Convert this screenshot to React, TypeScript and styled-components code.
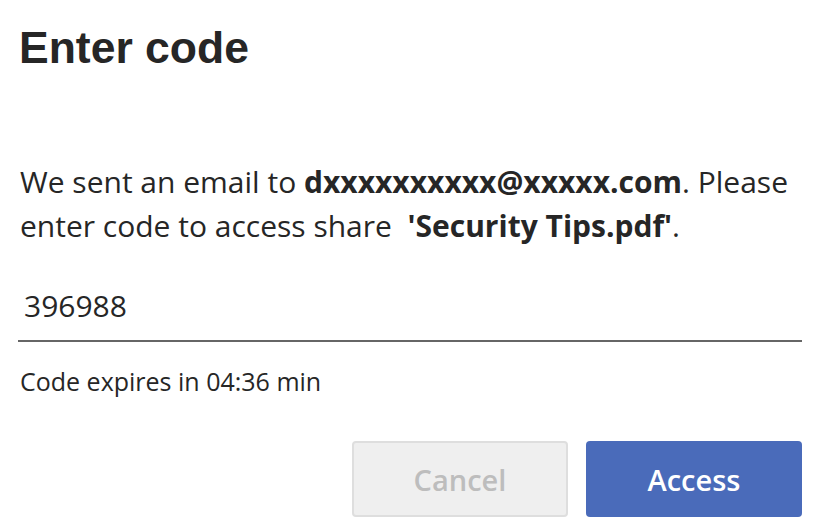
import styled, { createGlobalStyle } from "styled-components";

const GlobalStyle = createGlobalStyle`
  html, body {
    margin: 0;
    padding: 0;
    background: #fff;
  }
  body {
    font-family: "Open Sans", "Noto Sans", sans-serif;
    color: #262626;
  }
`;

const Dialog = styled.div`
  width: 784px;
  padding: 26px 13px 0 18px;
  display: flex;
  flex-direction: column;
`;

const Title = styled.h1`
  margin: 0 0 0 1px;
  font-family: "Liberation Sans", Arial, sans-serif;
  font-size: 44.5px;
  line-height: 44px;
  font-weight: 700;
  color: #262626;
`;

const Message = styled.p`
  margin: 90px 0 0 2px;
  font-size: 30px;
  line-height: 44px;
  color: #262626;

  b {
    font-weight: 700;
  }
`;

const CodeField = styled.div`
  margin-top: 38px;
  border-bottom: 2px solid #666;
  padding: 0 6px 14px;
  font-size: 30px;
  line-height: 40px;
  color: #262626;
`;

const Hint = styled.div`
  margin: 24px 0 0 2px;
  font-size: 25px;
  line-height: 30px;
  color: #262626;
`;

const Actions = styled.div`
  margin-top: 45px;
  display: flex;
  justify-content: flex-end;
  gap: 18px;
`;

const Button = styled.button<{ $primary?: boolean }>`
  width: 216px;
  height: 76px;
  box-sizing: border-box;
  border-radius: 4px;
  font-family: "Open Sans", "Noto Sans", sans-serif;
  font-size: 29px;
  font-weight: 600;
  border: ${(p) => (p.$primary ? "none" : "2px solid #dedede")};
  background: ${(p) => (p.$primary ? "#4a6bba" : "#efefef")};
  color: ${(p) => (p.$primary ? "#fff" : "#bdbdbd")};
  cursor: pointer;
`;

const App = () => {
  return (
    <>
      <GlobalStyle />
      <Dialog>
        <Title>Enter code</Title>
        <Message>
          We sent an email to <b>dxxxxxxxxxx@xxxxx.com</b>. Please
          <br />
          enter code to access share&nbsp; <b>'Security Tips.pdf'</b>.
        </Message>
        <CodeField>396988</CodeField>
        <Hint>Code expires in 04:36 min</Hint>
        <Actions>
          <Button disabled>Cancel</Button>
          <Button $primary>Access</Button>
        </Actions>
      </Dialog>
    </>
  );
};

export default App;
